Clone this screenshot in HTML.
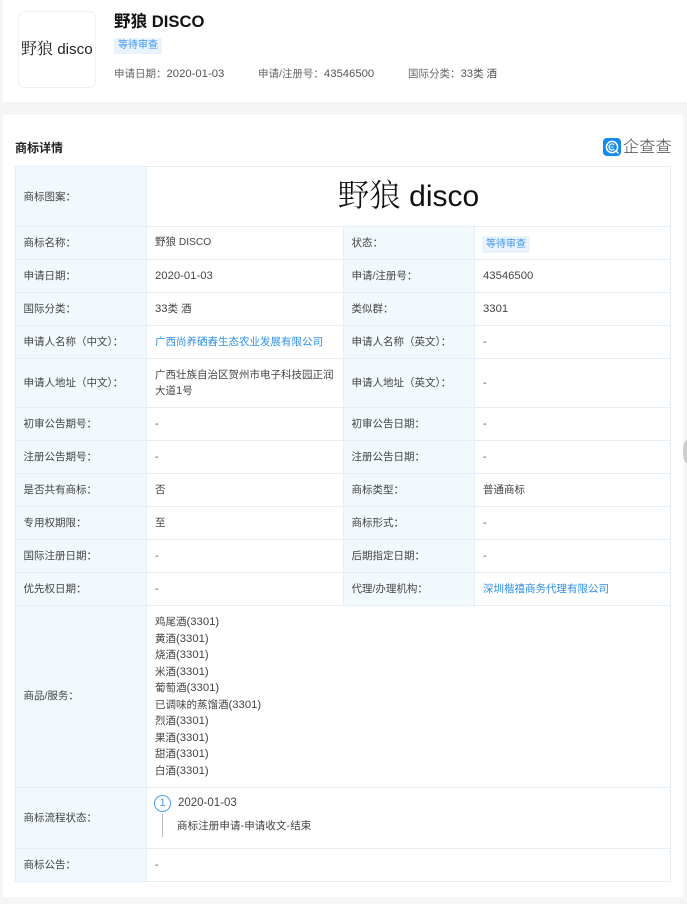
<!DOCTYPE html>
<html lang="zh"><head><meta charset="utf-8"><style>
*{box-sizing:border-box}
html,body{margin:0;padding:0}
body{width:687px;height:904px;position:relative;overflow:hidden;background:#f5f5f5;font-family:"Liberation Sans","Noto Sans CJK SC",sans-serif;font-size:10.5px;color:#333}
.card{position:absolute;background:#fff}
.a{position:absolute;white-space:nowrap}
table{position:absolute;left:15px;top:166px;width:656px;border-collapse:collapse;table-layout:fixed;font-size:10.5px;color:#444}
td{border:1px solid #e6eff6;padding:0 8px;vertical-align:middle;line-height:16.5px}
td.l{background:#f2f9fc;padding-left:7.5px}
a{color:#2f8fe8;text-decoration:none}
i{font-style:normal;font-size:11.3px}
b.c{font-weight:400;font-size:10.2px}
.tag{display:inline-block;background:#e8f3fe;color:#3f96ec;font-size:10px;line-height:17px;height:17px;padding:0 4px;border-radius:2px}
</style></head><body>
<div class="card" style="left:3px;top:0;width:684px;height:102px"></div>
<div class="a" style="left:18px;top:11px;width:78px;height:77px;border:1px solid #f0f0f0;border-radius:7px"></div>
<div class="a" style="left:21px;top:37px;font-size:15.2px;line-height:22px;color:#222"><span style="font-family:'Noto Serif CJK SC',serif;font-size:16px">野狼</span> disco</div>
<div class="a" style="left:114px;top:10px;font-size:16.6px;line-height:23px;font-weight:700;color:#111">野狼 DISCO</div>
<div class="a tag" style="left:114px;top:38px;height:16px;line-height:16px">等待审查</div>
<div class="a" style="left:114px;top:66px;line-height:16px;color:#666">申请日期：<i style="color:#555">2020-01-03</i></div>
<div class="a" style="left:258px;top:66px;line-height:16px;color:#666">申请/注册号：<i style="color:#555">43546500</i></div>
<div class="a" style="left:408px;top:66px;line-height:16px;color:#666">国际分类：<i style="color:#555">33</i><span style="color:#555">类 酒</span></div>

<div class="card" style="left:3px;top:115px;width:680px;height:782px"></div>
<div class="a" style="left:15px;top:140px;font-size:12px;line-height:17px;font-weight:700;color:#222">商标详情</div>
<svg class="a" style="left:603px;top:138px" width="18" height="18" viewBox="0 0 18 18"><rect width="18" height="18" rx="4" fill="#128bed"/><circle cx="9" cy="9" r="5.6" fill="none" stroke="#fff" stroke-width="1.5"/><path d="M11.3 7.1A3 3 0 1 0 11.3 10.9" fill="none" stroke="#fff" stroke-width="1.3"/><path d="M7.5 9h3" stroke="#fff" stroke-width="1"/><path d="M13 13l2.5 2.5" stroke="#fff" stroke-width="1.4"/></svg>
<div class="a" style="left:623px;top:138px;font-size:16px;line-height:20px;color:#444;letter-spacing:.3px;font-weight:300">企查查</div>

<table>
<colgroup><col style="width:131px"><col style="width:197px"><col style="width:131px"><col></colgroup>
<tr style="height:60px"><td class="l" style="padding-top:1px">商标图案：</td><td colspan="3" style="text-align:center;padding:0 0 3px;font-size:30px;color:#111;line-height:40px"><span style="font-family:'Noto Serif CJK SC',serif;font-size:31.5px;font-weight:300">野狼</span> disco</td></tr>
<tr style="height:33px"><td class="l">商标名称：</td><td>野狼 <b class="c">DISCO</b></td><td class="l">状态：</td><td><span class="tag" style="margin-left:-1px;position:relative;top:1px">等待审查</span></td></tr>
<tr style="height:33px"><td class="l">申请日期：</td><td><i>2020-01-03</i></td><td class="l">申请/注册号：</td><td><i>43546500</i></td></tr>
<tr style="height:33px"><td class="l">国际分类：</td><td><i>33</i>类 酒</td><td class="l">类似群：</td><td><i>3301</i></td></tr>
<tr style="height:33px"><td class="l">申请人名称（中文）：</td><td><a>广西尚养硒舂生态农业发展有限公司</a></td><td class="l">申请人名称（英文）：</td><td>-</td></tr>
<tr style="height:49px"><td class="l">申请人地址（中文）：</td><td>广西壮族自治区贺州市电子科技园正润大道<i>1</i>号</td><td class="l">申请人地址（英文）：</td><td>-</td></tr>
<tr style="height:33px"><td class="l">初审公告期号：</td><td>-</td><td class="l">初审公告日期：</td><td>-</td></tr>
<tr style="height:33px"><td class="l">注册公告期号：</td><td>-</td><td class="l">注册公告日期：</td><td>-</td></tr>
<tr style="height:33px"><td class="l">是否共有商标：</td><td>否</td><td class="l">商标类型：</td><td>普通商标</td></tr>
<tr style="height:33px"><td class="l">专用权期限：</td><td>至</td><td class="l">商标形式：</td><td>-</td></tr>
<tr style="height:33px"><td class="l">国际注册日期：</td><td>-</td><td class="l">后期指定日期：</td><td>-</td></tr>
<tr style="height:33px"><td class="l">优先权日期：</td><td>-</td><td class="l">代理/办理机构：</td><td><a>深圳楷禧商务代理有限公司</a></td></tr>
<tr style="height:182px"><td class="l">商品/服务：</td><td colspan="3">鸡尾酒<i>(3301)</i><br>黄酒<i>(3301)</i><br>烧酒<i>(3301)</i><br>米酒<i>(3301)</i><br>葡萄酒<i>(3301)</i><br>已调味的蒸馏酒<i>(3301)</i><br>烈酒<i>(3301)</i><br>果酒<i>(3301)</i><br>甜酒<i>(3301)</i><br>白酒<i>(3301)</i></td></tr>
<tr style="height:61px"><td class="l">商标流程状态：</td><td colspan="3"></td></tr>
<tr style="height:33px"><td class="l">商标公告：</td><td colspan="3">-</td></tr>
</table>
<div class="a" style="left:154px;top:795px;width:17px;height:17px;border:1px solid #4a9fef;border-radius:50%;text-align:center;line-height:15px;color:#5a9be8;font-size:11px">1</div>
<div class="a" style="left:178px;top:795px;line-height:16px;color:#444;font-size:11.5px">2020-01-03</div>
<div class="a" style="left:162px;top:814px;width:1px;height:23px;background:#bbb"></div>
<div class="a" style="left:177px;top:818px;line-height:16px;color:#444;letter-spacing:.1px">商标注册申请-申请收文-结束</div>
<div class="a" style="left:683px;top:440px;width:8px;height:23px;border-radius:50%;background:#ccc"></div>
</body></html>
